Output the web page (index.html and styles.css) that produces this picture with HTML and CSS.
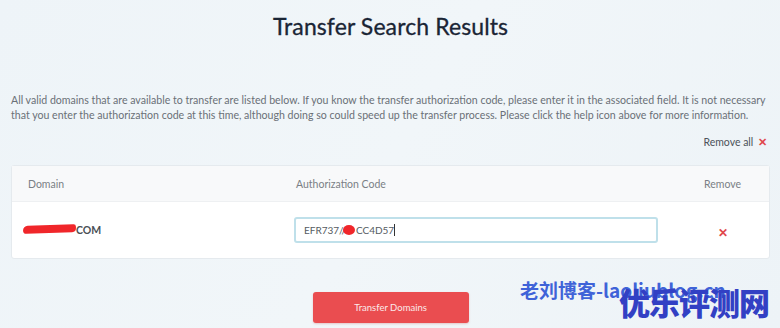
FILE: index.html
```html
<!DOCTYPE html>
<html>
<head>
<meta charset="utf-8">
<link rel="stylesheet" href="styles.css">
</head>
<body>
<div class="page">
  <h1 class="title">Transfer Search Results</h1>
  <p class="intro">All valid domains that are available to transfer are listed below. If you know the transfer authorization code, please enter it in the associated field. It is not necessary that you enter the authorization code at this time, although doing so could speed up the transfer process. Please click the help icon above for more information.</p>
  <div class="remove-all">Remove all <span class="x">&#x2715;</span></div>
  <div class="card">
    <div class="row head">
      <div class="c1">Domain</div>
      <div class="c2">Authorization Code</div>
      <div class="c3">Remove</div>
    </div>
    <div class="row body">
      <div class="c1 domain"><span class="scribble"></span>COM</div>
      <div class="c2"><div class="input">EFR737//<span class="blob"></span>CC4D57<span class="caret"></span></div></div>
      <div class="c3"><span class="x big">&#x2715;</span></div>
    </div>
  </div>
  <div class="actions"><button class="btn">Transfer Domains</button></div>
</div>
<div class="wm-small">老刘博客-laoliublog.cn</div>
<div class="wm-big">优乐评测网</div>
</body>
</html>
```
FILE: styles.css
```css
html, body { margin: 0; padding: 0; }
body {
  width: 780px; height: 328px; overflow: hidden;
  background: linear-gradient(120deg, #eef4f8 0%, #f1f6f9 50%, #edf3f7 100%);
  font-family: "Lato", "Noto Sans", sans-serif;
  position: relative;
}
.page { padding: 0 10px 0 11px; }
.title {
  margin: 0; padding-top: 12px;
  text-align: center; font-weight: 400; font-size: 23px; line-height: 28px;
  color: #1a2535; letter-spacing: 0.1px; -webkit-text-stroke: 0.3px #1a2535;
}
.intro {
  margin: 53px 0 0 0; font-size: 10.6px; line-height: 15px; color: #6a7077;
}
.remove-all {
  margin-top: 12px; text-align: right; font-size: 10.5px; line-height: 14px; color: #4c535a; padding-right: 3px;
}
.x { color: #e0484c; font-weight: 700; margin-left: 2px; }
.card {
  margin-top: 16px; background: #fff; border: 1px solid #e5eaee; border-radius: 3px;
}
.row {
  display: grid; grid-template-columns: 248px 364px 1fr; column-gap: 18px;
  padding-left: 16px; align-items: center;
}
.head { height: 35px; background: #f8f9fa; border-bottom: 1px solid #eef0f2; font-size: 10.5px; color: #7a7f85; }
.head .c2 { padding-left: 2px; }
.c3 { text-align: center; }
.body { height: 56px; }
.domain { font-size: 10.5px; font-weight: 700; color: #4a4f55; display: flex; align-items: center; margin-left: -5px; }
.scribble {
  display: inline-block; width: 53px; height: 8px; background: #f0262a;
  border-radius: 6px 3px 5px 4px; transform: rotate(-2deg); margin-top: -2px;
}
.input {
  height: 22px; border: 2px solid #bfe0ea; border-radius: 3px; background: #fff;
  display: flex; align-items: center; padding-left: 8px; font-size: 10px; color: #555b61;
}
.blob { display: inline-block; width: 12px; height: 10px; background: #f0262a; border-radius: 50%; margin: 0 1px 0 -3px; }
.caret { display: inline-block; width: 1px; height: 12px; background: #333; }
.big { font-size: 12px; margin-left: 0; }
.actions { display: flex; justify-content: center; padding-top: 33px; }
.btn {
  width: 156px; height: 31px; border: 0; border-radius: 3px; background: #ea4d50; color: #fbe9e9;
  font-family: "Lato", "Noto Sans", sans-serif; font-size: 9.5px; box-shadow: 0 1px 2px rgba(200,60,60,0.25);
}
.wm-small {
  position: absolute; left: 520px; top: 279px; font-size: 19px; font-weight: 700; color: #3f63d8;
  font-family: "Noto Sans CJK SC", sans-serif; line-height: 22px; white-space: nowrap;
}
.wm-big {
  position: absolute; left: 619px; top: 282px; font-size: 31px; font-weight: 900; color: #3240c4;
  font-family: "Noto Sans CJK SC", sans-serif; line-height: 40px; letter-spacing: -1px; white-space: nowrap;
}
```
